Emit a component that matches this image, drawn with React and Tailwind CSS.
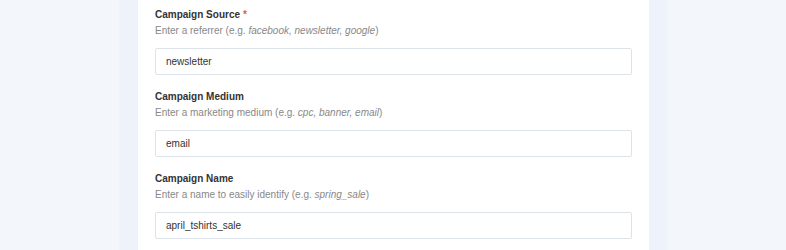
import React from "react";

const fields = [
  {
    label: "Campaign Source",
    required: true,
    hint: ["Enter a referrer (e.g. ", "facebook, newsletter, google", ")"],
    value: "newsletter",
  },
  {
    label: "Campaign Medium",
    hint: ["Enter a marketing medium (e.g. ", "cpc, banner, email", ")"],
    value: "email",
  },
  {
    label: "Campaign Name",
    hint: ["Enter a name to easily identify (e.g. ", "spring_sale", ")"],
    value: "april_tshirts_sale",
  },
];

const Field = ({ label, required, hint, value }) => (
  <div className="pb-[15px]">
    <div className="h-[14px] leading-[14px] text-[10px] font-bold text-[#333]">
      {label}
      {required && <span className="ml-[3px] text-[#e25a5a]">*</span>}
    </div>
    <div className="mt-[2px] h-[14px] leading-[14px] text-[10px] text-[#888]">
      {hint[0]}
      <em>{hint[1]}</em>
      {hint[2]}
    </div>
    <input
      readOnly
      value={value}
      className="mt-[10px] block h-[27px] w-full rounded-[2px] border border-[#dde3ea] bg-white px-[10px] text-[10px] text-[#333] outline-none"
    />
  </div>
);

export default function App() {
  return (
    <div
      className="flex h-[250px] w-full justify-center overflow-hidden bg-[#f3f6fb] text-[#333]"
      style={{ fontFamily: '"Liberation Sans", Arial, sans-serif' }}
    >
      <div className="w-[548px] bg-[#eef2fb] pl-[19px] pr-[18px]">
        <div className="h-full bg-white px-[17px] pt-[8px]">
          {fields.map((f) => (
            <Field key={f.label} {...f} />
          ))}
        </div>
      </div>
    </div>
  );
}
